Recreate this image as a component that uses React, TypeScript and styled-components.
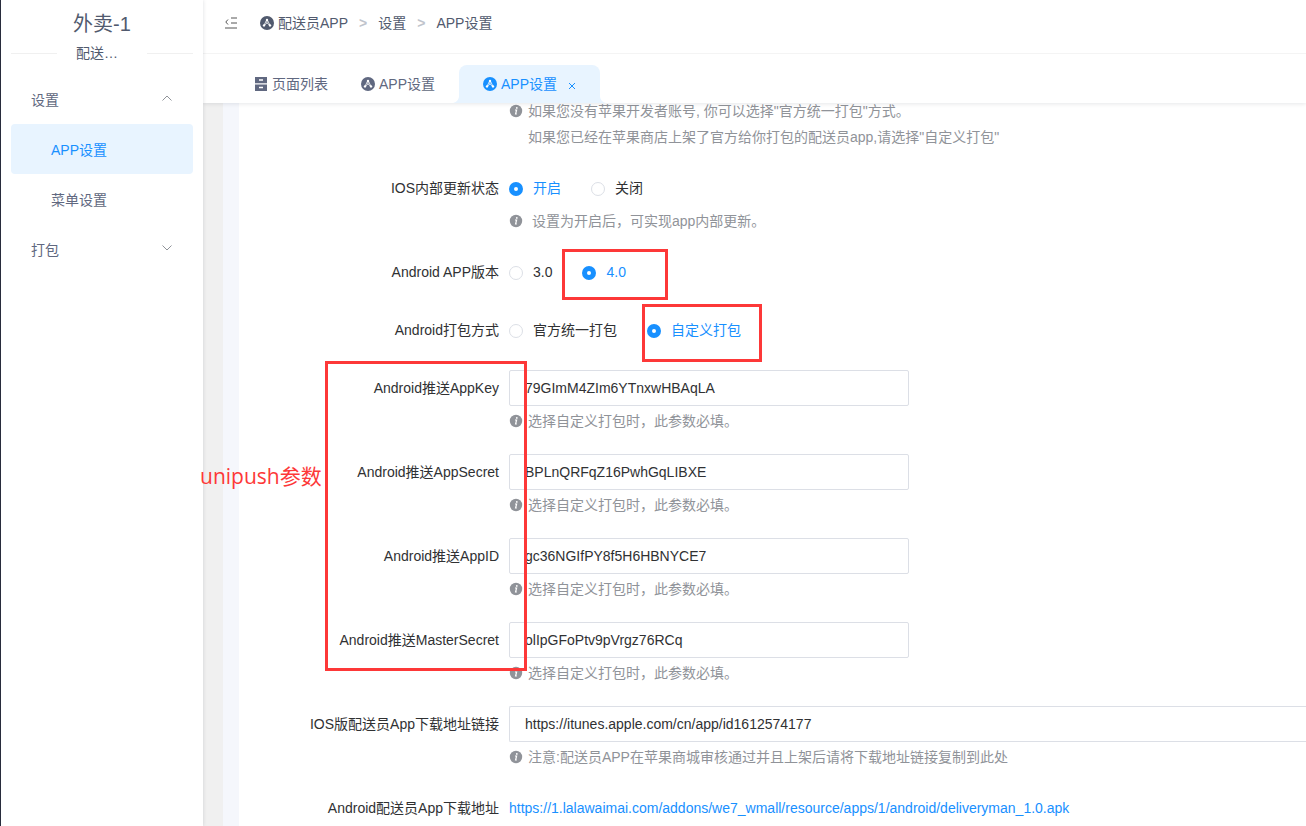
import React from 'react';
import styled, { createGlobalStyle } from 'styled-components';

const GlobalStyle = createGlobalStyle`
  * { box-sizing: border-box; }
  body {
    margin: 0;
    background: #fff;
    color: #303133;
    font: 14px/20px 'Liberation Sans', 'Noto Sans CJK SC', sans-serif;
  }
  button, input { font: inherit; color: inherit; }
  button { border: 0; background: none; padding: 0; cursor: pointer; }
`;

const Page = styled.div`
  position: relative;
  display: flex;
  min-height: 100vh;
  overflow: hidden;
  border-left: 1px solid #282c3c;
`;

const Sidebar = styled.aside`
  position: relative;
  z-index: 3;
  flex: 0 0 202px;
  padding: 0 10px;
  background: #fff;
  box-shadow: 0 0 4px rgba(0, 21, 41, 0.14);
`;

const ShopName = styled.h1`
  margin: 0;
  padding-top: 10px;
  height: 43px;
  font-size: 20px;
  line-height: 28px;
  font-weight: 400;
  text-align: center;
  color: #515a6e;
`;

const SectionTitle = styled.div`
  display: flex;
  align-items: center;
  justify-content: space-between;
  height: 20px;
  margin-bottom: 11px;
  color: #515a6e;
  &::before, &::after {
    content: '';
    width: 46px;
    height: 1px;
    background: #f0f0f0;
  }
`;

const SectionName = styled.span`
  width: 52px;
`;

const MenuButton = styled.button<{ $active?: boolean; $nested?: boolean }>`
  display: flex;
  align-items: center;
  justify-content: space-between;
  width: 100%;
  height: 50px;
  padding: 2px 20px 0 ${(p) => (p.$nested ? 40 : 20)}px;
  border-radius: 4px;
  background: ${(p) => (p.$active ? '#e8f4ff' : 'transparent')};
  color: ${(p) => (p.$active ? '#1890ff' : '#606880')};
`;

const Main = styled.div`
  display: flex;
  flex: 1;
  min-width: 0;
  flex-direction: column;
`;

const Header = styled.header`
  position: relative;
  z-index: 2;
  background: #fff;
  box-shadow: 0 1px 4px rgba(0, 21, 41, 0.1);
`;

const TopBar = styled.div`
  display: flex;
  align-items: center;
  gap: 22px;
  height: 54px;
  padding: 0 21px 8px;
  border-bottom: 1px solid #f4f4f4;
  color: #515a6e;
`;

const IconButton = styled.button`
  display: flex;
`;

const Crumbs = styled.nav`
  display: flex;
  align-items: center;
  gap: 11px;
`;

const Crumb = styled.a`
  display: flex;
  align-items: center;
  gap: 4px;
  color: #515a6e;
  text-decoration: none;
`;

const Separator = styled.span`
  font-weight: 700;
  color: #c0c4cc;
`;

const Tabs = styled.div`
  display: flex;
  align-items: flex-end;
  gap: 1px;
  height: 49px;
  padding-left: 35px;
`;

const Tab = styled.button<{ $active?: boolean }>`
  position: relative;
  display: flex;
  align-items: center;
  gap: 4px;
  height: 38px;
  padding: 0 ${(p) => (p.$active ? 24 : 16)}px;
  margin-left: ${(p) => (p.$active ? 7 : 0)}px;
  border-radius: 8px 8px 0 0;
  background: ${(p) => (p.$active ? '#e8f4ff' : 'transparent')};
  color: ${(p) => (p.$active ? '#1890ff' : '#606880')};
`;

const TabFoot = styled.svg<{ $side: 'left' | 'right' }>`
  position: absolute;
  bottom: 0;
  ${(p) => p.$side}: -6px;
`;

const CloseIcon = styled.svg`
  margin-left: 7px;
  margin-top: 4px;
`;

const Content = styled.main`
  display: flex;
  flex: 1;
  padding-left: 20px;
  background: #f0f0f0;
`;

const Card = styled.div`
  flex: 1;
  min-width: 0;
  border-left: 16px solid #f5f7fc;
  background: #fff;
`;

const Form = styled.form`
  margin-top: -5px;
`;

const Row = styled.div<{ $help?: boolean }>`
  display: grid;
  grid-template-columns: 260px minmax(0, 1fr);
  column-gap: 10px;
  margin-bottom: ${(p) => (p.$help ? 20 : 22)}px;
  &:last-child { margin-bottom: 0; }
`;

const labelStyle = `
  text-align: right;
  line-height: 36px;
  white-space: nowrap;
`;
const Label = styled.label`${labelStyle}`;
const Caption = styled.span`${labelStyle}`;

const Field = styled.div`
  min-width: 0;
`;

const Input = styled.input<{ $wide?: boolean }>`
  display: block;
  width: ${(p) => (p.$wide ? '100%' : '400px')};
  height: 36px;
  padding: 0 15px;
  border: 1px solid #dcdfe6;
  border-right-width: ${(p) => (p.$wide ? 0 : 1)}px;
  border-radius: ${(p) => (p.$wide ? '2px 0 0 2px' : '2px')};
  background: #fff;
  outline: none;
`;

const Help = styled.p`
  display: grid;
  grid-template-columns: 14px 1fr;
  column-gap: 5px;
  align-items: center;
  margin: 0;
  padding-top: 2px;
  line-height: 26px;
  color: #909399;
`;

const HelpBlock = styled.div`
  grid-column: 2;
  & > p { padding-top: 0; }
`;

const HelpText = styled.span`
  grid-column: 2;
  white-space: pre;
`;

const RadioGroup = styled.div`
  display: flex;
  gap: 30px;
  height: 36px;
`;

const RadioLabel = styled.label`
  display: flex;
  align-items: center;
  gap: 10px;
  &:has(input:checked) { color: #1890ff; }
`;

const Radio = styled.input`
  appearance: none;
  width: 14px;
  height: 14px;
  margin: 1px 0 0;
  border: 1px solid #dcdfe6;
  border-radius: 50%;
  background: #fff;
  &:checked { border: 5px solid #1890ff; }
`;

const Link = styled.a`
  line-height: 36px;
  color: #1890ff;
  text-decoration: none;
`;

const Mark = styled.div<{ $x: number; $y: number; $w: number; $h: number }>`
  position: absolute;
  z-index: 4;
  left: ${(p) => p.$x}px;
  top: ${(p) => p.$y}px;
  width: ${(p) => p.$w}px;
  height: ${(p) => p.$h}px;
  border: 3px solid #fd3838;
  pointer-events: none;
`;

const Note = styled.div`
  position: absolute;
  z-index: 4;
  left: 199px;
  top: 461px;
  font: 21px/30px 'Open Sans', 'Noto Sans CJK SC', sans-serif;
  color: #fd3838;
`;

const AppIcon = () => (
  <svg width="14" height="14" viewBox="0 0 14 14" aria-hidden="true">
    <circle cx="7" cy="7" r="7" fill="currentColor" />
    <path d="M7 4v3.2M7 6.8 4.2 9.6M7 6.8l2.8 2.8M6.4 4.4 4.2 9M7.6 4.4 9.8 9" stroke="#fff" strokeWidth="0.8" fill="none" />
    <circle cx="7" cy="4" r="1.2" fill="#fff" />
    <circle cx="4" cy="9.4" r="1.2" fill="#fff" />
    <circle cx="10" cy="9.4" r="1.2" fill="#fff" />
  </svg>
);

const ListIcon = () => (
  <svg width="14" height="14" viewBox="0 0 14 14" aria-hidden="true">
    <path d="M1 0h12v6.3H1zM1 7.5h12V14H1z" fill="currentColor" />
    <path d="M5 3h4M5 10.5h4" stroke="#fff" strokeWidth="1.4" />
  </svg>
);

const FoldIcon = () => (
  <svg width="14" height="14" viewBox="0 0 14 14" fill="none" stroke="#555" aria-hidden="true">
    <path d="M7 2h6M7 7h6M1 12h12M4 3.5 1.8 6 4 8.5" />
  </svg>
);

const Chevron = ({ up }: { up?: boolean }) => (
  <svg width="12" height="12" viewBox="0 0 12 12" fill="none" stroke="#909399" aria-hidden="true">
    <path d={up ? 'M1.5 6.5 6 2l4.5 4.5' : 'M1.5 1.5 6 6l4.5-4.5'} />
  </svg>
);

const InfoIcon = () => (
  <svg width="14" height="14" viewBox="0 0 14 14" aria-hidden="true">
    <circle cx="7" cy="7" r="6.2" fill="#909399" />
    <path d="M6 6h1.6L6.6 10h1.2" stroke="#fff" strokeWidth="1.2" fill="none" />
    <circle cx="7.8" cy="3.9" r="0.9" fill="#fff" />
  </svg>
);

const HelpLine = ({ text }: { text: string }) => (
  <Help>
    <InfoIcon />
    <HelpText>{text}</HelpText>
  </Help>
);

type RadioRowProps = { label: string; name: string; options: string[]; value: string; help?: string };

const RadioRow = ({ label, name, options, value, help }: RadioRowProps) => (
  <Row $help={!!help} role="radiogroup" aria-labelledby={`${name}-label`}>
    <Caption id={`${name}-label`}>{label}</Caption>
    <Field>
      <RadioGroup>
        {options.map((option) => (
          <RadioLabel key={option}>
            <Radio type="radio" name={name} value={option} defaultChecked={option === value} />
            {option}
          </RadioLabel>
        ))}
      </RadioGroup>
      {help && <HelpLine text={help} />}
    </Field>
  </Row>
);

type TextRowProps = { label: string; id: string; value: string; help: string; wide?: boolean };

const TextRow = ({ label, id, value, help, wide }: TextRowProps) => (
  <Row $help>
    <Label htmlFor={id}>{label}</Label>
    <Field>
      <Input id={id} defaultValue={value} $wide={wide} />
      <HelpLine text={help} />
    </Field>
  </Row>
);

const required = '选择自定义打包时，此参数必填。';
const pushParams = [
  { id: 'app-key', label: 'Android推送AppKey', value: '79GImM4ZIm6YTnxwHBAqLA' },
  { id: 'app-secret', label: 'Android推送AppSecret', value: 'BPLnQRFqZ16PwhGqLIBXE' },
  { id: 'app-id', label: 'Android推送AppID', value: 'gc36NGIfPY8f5H6HBNYCE7' },
  { id: 'master-secret', label: 'Android推送MasterSecret', value: 'olIpGFoPtv9pVrgz76RCq' },
];

export default function App() {
  return (
    <Page>
      <GlobalStyle />
      <Sidebar>
        <ShopName>外卖-1</ShopName>
        <SectionTitle><SectionName>配送…</SectionName></SectionTitle>
        <MenuButton>设置<Chevron up /></MenuButton>
        <MenuButton $active $nested>APP设置</MenuButton>
        <MenuButton $nested>菜单设置</MenuButton>
        <MenuButton>打包<Chevron /></MenuButton>
      </Sidebar>

      <Main>
        <Header>
          <TopBar>
            <IconButton aria-label="收起菜单"><FoldIcon /></IconButton>
            <Crumbs>
              <Crumb href="#app"><AppIcon />配送员APP</Crumb>
              <Separator>&gt;</Separator>
              <Crumb href="#settings">设置</Crumb>
              <Separator>&gt;</Separator>
              <Crumb href="#app-settings">APP设置</Crumb>
            </Crumbs>
          </TopBar>
          <Tabs>
            <Tab><ListIcon />页面列表</Tab>
            <Tab><AppIcon />APP设置</Tab>
            <Tab $active>
              <TabFoot $side="left" width="6" height="6" viewBox="0 0 6 6">
                <path d="M6 0v6H0Q5 5 6 0Z" fill="#e8f4ff" />
              </TabFoot>
              <AppIcon />APP设置
              <CloseIcon width="8" height="8" viewBox="0 0 8 8" stroke="currentColor">
                <path d="m1 1 6 6M7 1 1 7" />
              </CloseIcon>
              <TabFoot $side="right" width="6" height="6" viewBox="0 0 6 6">
                <path d="M0 0v6h6Q1 5 0 0Z" fill="#e8f4ff" />
              </TabFoot>
            </Tab>
          </Tabs>
        </Header>

        <Content>
          <Card>
            <Form>
              <Row $help>
                <HelpBlock>
                  <HelpLine text={'如果您没有苹果开发者账号, 你可以选择"官方统一打包"方式。'} />
                  <Help>
                    <HelpText>如果您已经在苹果商店上架了官方给你打包的配送员app,请选择"自定义打包"</HelpText>
                  </Help>
                </HelpBlock>
              </Row>
              <RadioRow
                label="IOS内部更新状态"
                name="ios-update"
                options={['开启', '关闭']}
                value="开启"
                help={' 设置为开启后，可实现app内部更新。'}
              />
              <RadioRow label="Android APP版本" name="android-version" options={['3.0', '4.0']} value="4.0" />
              <RadioRow
                label="Android打包方式"
                name="android-build"
                options={['官方统一打包', '自定义打包']}
                value="自定义打包"
              />
              {pushParams.map((param) => (
                <TextRow key={param.id} {...param} help={required} />
              ))}
              <TextRow
                id="ios-url"
                label="IOS版配送员App下载地址链接"
                value="https://itunes.apple.com/cn/app/id1612574177"
                help="注意:配送员APP在苹果商城审核通过并且上架后请将下载地址链接复制到此处"
                wide
              />
              <Row>
                <Caption>Android配送员App下载地址</Caption>
                <Link href="#download">
                  https://1.lalawaimai.com/addons/we7_wmall/resource/apps/1/android/deliveryman_1.0.apk
                </Link>
              </Row>
            </Form>
          </Card>
        </Content>
      </Main>

      <Mark $x={561} $y={249} $w={106} $h={51} />
      <Mark $x={641} $y={304} $w={120} $h={58} />
      <Mark $x={324} $y={361} $w={202} $h={310} />
      <Note>unipush参数</Note>
    </Page>
  );
}
